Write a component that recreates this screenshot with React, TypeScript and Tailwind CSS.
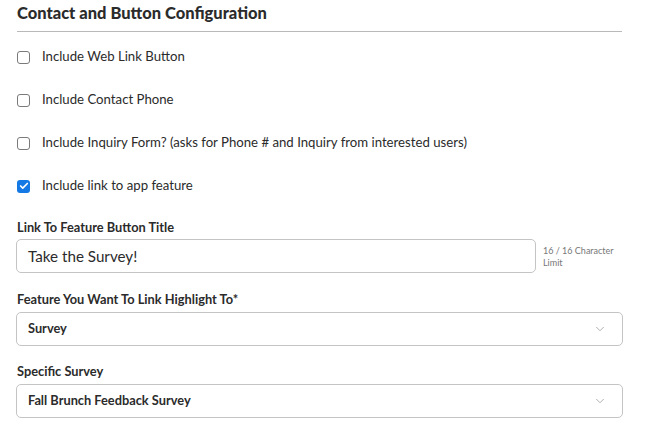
import { ChevronDown, Check } from 'lucide-react';

const font = { fontFamily: 'Lato, "Noto Sans", sans-serif' };

function Box({ checked }: { checked?: boolean }) {
  if (checked) {
    return (
      <span className="w-[13px] h-[13px] rounded-[3px] bg-[#1479e4] flex items-center justify-center shrink-0">
        <Check size={10} strokeWidth={4} className="text-white" />
      </span>
    );
  }
  return <span className="w-[13px] h-[13px] rounded-[3px] border border-[#7a7a7a] bg-white shrink-0" />;
}

function Row({ label, checked }: { label: string; checked?: boolean }) {
  return (
    <div className="flex items-center gap-3 h-[14px]">
      <Box checked={checked} />
      <span className="text-[13.2px] text-[#2b2b2b]">{label}</span>
    </div>
  );
}

function Select({ value }: { value: string }) {
  return (
    <div className="w-[607px] h-[34px] rounded-[5px] border border-[#c4c4c4] flex items-center justify-between pl-[11px] pr-[15px]">
      <span className="text-[12.8px] font-bold text-[#2b2b2b]">{value}</span>
      <ChevronDown size={14} strokeWidth={1.6} className="text-[#aaaaaa]" />
    </div>
  );
}

export default function App() {
  return (
    <div className="w-[671px] h-[447px] bg-white pl-[17px] pt-[3px]" style={font}>
      <h2 className="text-[16.5px] font-black text-[#2b2b2b] leading-[20px]">Contact and Button Configuration</h2>
      <div className="w-[605px] h-px bg-[#b9b9b9] mt-[8px]" />

      <div className="flex flex-col gap-[29px] mt-[18px]">
        <Row label="Include Web Link Button" />
        <Row label="Include Contact Phone" />
        <Row label="Include Inquiry Form? (asks for Phone # and Inquiry from interested users)" />
        <Row label="Include link to app feature" checked />
      </div>

      <div className="mt-[26px] text-[12.8px] font-bold text-[#2b2b2b] leading-[16px]">Link To Feature Button Title</div>
      <div className="flex items-start gap-[7px] mt-[4px] -ml-px">
        <div className="w-[520px] h-[34px] rounded-[5px] border border-[#c4c4c4] flex items-center pl-[11px]">
          <span className="text-[15.2px] text-[#2b2b2b]">Take the Survey!</span>
        </div>
        <div className="text-[9px] text-[#777] leading-[12px] mt-[6px] w-[80px]">16 / 16 Character Limit</div>
      </div>

      <div className="mt-[18px] text-[12.8px] font-bold text-[#2b2b2b] leading-[16px]">Feature You Want To Link Highlight To*</div>
      <div className="mt-[5px] -ml-px">
        <Select value="Survey" />
      </div>

      <div className="mt-[17px] text-[12.8px] font-bold text-[#2b2b2b] leading-[16px]">Specific Survey</div>
      <div className="mt-[5px] -ml-px">
        <Select value="Fall Brunch Feedback Survey" />
      </div>
    </div>
  );
}
